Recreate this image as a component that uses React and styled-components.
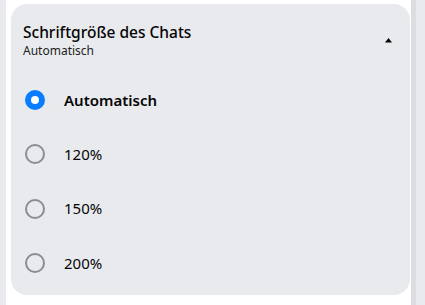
import React, { useState } from "react";
import styled, { createGlobalStyle } from "styled-components";

const Global = createGlobalStyle`
  html, body { margin: 0; padding: 0; background: #ffffff; }
  body { font-family: "Segoe UI", "Noto Sans", "Open Sans", sans-serif; color: #050505; }
`;

const Page = styled.div`
  display: flex;
  height: 305px;
  width: 425px;
  overflow: hidden;
`;

const SideStrip = styled.div`
  width: ${(p) => p.$w}px;
  flex: none;
  background: ${(p) => p.$c};
  margin-left: ${(p) => p.$ml || 0}px;
`;

const Card = styled.section`
  margin: 4px 0 0 5px;
  width: 399px;
  height: 291px;
  flex: none;
  background: #e9eaee;
  border-radius: 16px;
  box-sizing: border-box;
  padding: 0 12px;
`;

const Header = styled.div`
  display: flex;
  align-items: center;
  justify-content: space-between;
  padding-top: 15px;
  height: 58px;
  box-sizing: border-box;
`;

const HeaderText = styled.div`
  display: flex;
  flex-direction: column;
`;

const Title = styled.div`
  font-size: 15.5px;
  font-weight: 500;
  line-height: 21px;
`;

const Subtitle = styled.div`
  font-size: 12px;
  line-height: 16px;
  color: #1c1e21;
`;

const Caret = styled.svg`
  width: 9px;
  height: 6px;
  margin-right: 5px;
  margin-top: -1px;
`;

const List = styled.div`
  display: flex;
  flex-direction: column;
  padding-top: 11px;
`;

const Row = styled.label`
  display: flex;
  align-items: center;
  height: 54.3px;
  cursor: pointer;
  gap: 19px;
`;

const Radio = styled.span`
  width: 20px;
  height: 20px;
  margin-left: 2px;
  border-radius: 50%;
  box-sizing: border-box;
  flex: none;
  border: ${(p) => (p.$on ? "6px solid #0a7cff" : "2px solid #8a8d91")};
  background: ${(p) => (p.$on ? "#ffffff" : "transparent")};
`;

const Label = styled.span`
  font-size: 15px;
  font-weight: ${(p) => (p.$on ? 600 : 400)};
  line-height: 21px;
`;

const options = ["Automatisch", "120%", "150%", "200%"];

export default function App() {
  const [sel, setSel] = useState(0);
  return (
    <Page>
      <Global />
      <SideStrip $w={6} $c="#e9eaee" />
      <Card>
        <Header>
          <HeaderText>
            <Title>Schriftgröße des Chats</Title>
            <Subtitle>Automatisch</Subtitle>
          </HeaderText>
          <Caret viewBox="0 0 9 6">
            <path d="M1 5.5 L4.5 1 L8 5.5 Z" fill="#050505" />
          </Caret>
        </Header>
        <List>
          {options.map((o, i) => (
            <Row key={o} onClick={() => setSel(i)}>
              <Radio $on={sel === i} />
              <Label $on={sel === i}>{o}</Label>
            </Row>
          ))}
        </List>
      </Card>
      <SideStrip $w={5} $c="#dcdde1" $ml={1} />
      <SideStrip $w={9} $c="#e9eaee" />
    </Page>
  );
}
